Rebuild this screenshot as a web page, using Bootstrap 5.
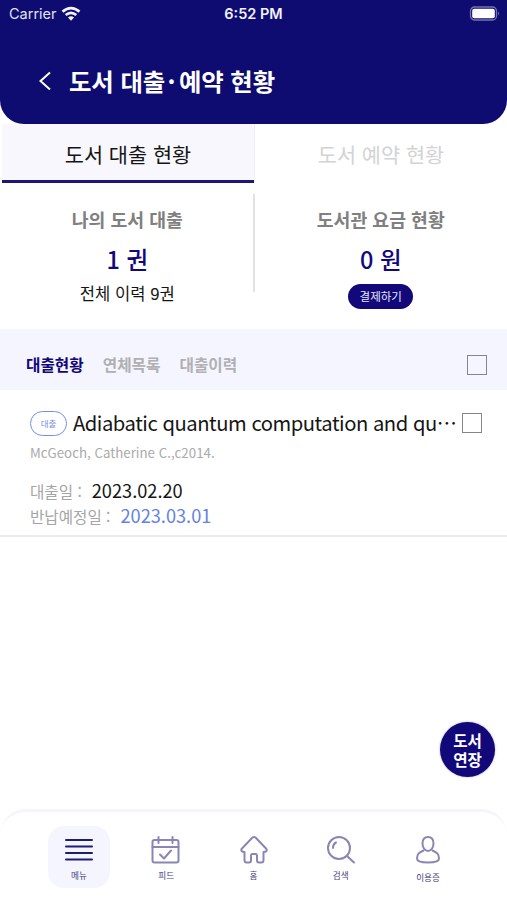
<!DOCTYPE html>
<html lang="ko">
<head>
<meta charset="utf-8">
<meta name="viewport" content="width=device-width, initial-scale=1">
<title>도서 대출·예약 현황</title>
<link href="https://cdn.jsdelivr.net/npm/bootstrap@5.3.0/dist/css/bootstrap.min.css" rel="stylesheet">
<style>
:root{--navy:#0e0c70;--pale:#f5f5ff}
body{font-family:"Noto Sans CJK KR",sans-serif;color:#151515;background:#fff;height:900px;overflow:hidden}
svg{display:block;flex:none}
.app-head{height:124px;background:var(--navy);border-radius:0 0 24px 24px}
.status{height:28px;font:15px/28px Inter,sans-serif;padding:0 7px 0 9px;color:#e2e2f5}
.status-side{width:90px}
.carrier{font-size:14.5px}
.clock{font-weight:600;font-size:14.5px;color:#f1f1fc;margin-right:2px}
.page-title{font-size:24.4px;line-height:36px;font-weight:700;margin:0 0 0 16px;letter-spacing:-.1px}
.page-title span{margin:0 3.5px 0 2.5px}
.title-row{padding:35px 0 0 38px}
.tabs-row{height:58px;font-size:20.8px;line-height:60px}
.tab-on{background:#f7f7fd;border-bottom:3px solid #1d1878;height:59px;margin-left:2px;width:252px}
.tab-off{color:#d3d3d3;border-left:1px solid #eef0f5}
.summary{height:147px;padding-top:12px}
.rule{width:2px;height:98px;background:#e2e2e4}
.sum-left{padding-left:2px}
.sum-name{font-size:18.3px;line-height:26px;font-weight:700;color:#808080;margin-top:12px}
.sum-value{font-size:23.5px;line-height:34px;font-weight:500;color:#12087d;margin-top:10px}
.sum-note{font-size:16.6px;line-height:24px;margin-top:5px}
.sum-note span{font-family:"Liberation Sans",sans-serif}
.pay{background:#12087a;color:#e8e8fb;font-size:11.5px;line-height:24px;width:65px;height:25px;margin-top:8px}
.filter{height:61px;background:var(--pale);font-size:15.7px;line-height:24px;padding:11px 20px 0 26px;color:#b0b0b3;font-weight:700}
.filter-gap{margin-left:19px}
.filter-on{color:#12087a}
.tick{width:20px;height:20px;border:1.5px solid #85858a;flex:none}
.loan{height:147px;border-bottom:2px solid #ececee;padding:18px 25px 0 30px}
.state{width:37px;height:25px;border:1.5px solid #7690e4;border-radius:13px;color:#7893e8;font-size:8.5px;line-height:22px;flex:none}
.book{font-size:20.2px;line-height:30px;margin-left:6px;width:389px;white-space:nowrap;letter-spacing:-.46px}
.author{font-size:13.3px;line-height:20px;color:#aaa;margin-top:5px}
.dates{font-size:15.6px;line-height:24.5px;color:#a5a5a5;padding-top:15px}
.dates div{height:24.5px}
.dates span{font-size:18.2px;color:#151515;margin-left:10px}
.dates .due{color:#6382e4}
.fab{position:absolute;left:440px;top:722px;width:55px;height:55px;background:#12087a;color:#fff;font-size:15.6px;line-height:19px;font-weight:700;box-shadow:0 0 2px #9c98c8}
.dock{height:91px;border-top:3px solid #f5f4fd;border-radius:26px 26px 0 0;padding:14px 48px 0}
.dock-item{width:62px;height:62px;color:#45417f;font-size:8.6px;line-height:12px;padding-top:9px}
.dock-item svg{fill:none;stroke:#8986b5;stroke-width:2;stroke-linecap:round;stroke-linejoin:round;margin:0 auto 4px}
.dock-item:last-child svg{margin-bottom:6px}
.dock-on{background:var(--pale);border-radius:16px}
.dock-on svg{stroke:#201b76}
</style>
<script src="https://cdn.jsdelivr.net/npm/bootstrap@5.3.0/dist/js/bootstrap.bundle.min.js"></script>
</head>
<body class="d-flex flex-column">
<header class="app-head text-white">
  <div class="status d-flex justify-content-between">
    <div class="status-side carrier d-flex align-items-center">Carrier
      <svg class="ms-1" width="20" height="16" viewBox="0 0 20 16" fill="none" stroke="#f4f4ff" stroke-width="2.7"><path d="M1.500 5.600Q10-1.500 18.500 5.600M4.700 9Q10 4.600 15.300 9"/><path d="M7 11.500q3-2.400 6 0l-3 3.200z" fill="#f4f4ff" stroke="none"/></svg>
    </div>
    <div class="clock">6:52 PM</div>
    <div class="status-side d-flex align-items-center justify-content-end">
      <svg width="31" height="16" viewBox="0 0 31 16"><rect x="1.500" y="1" width="26" height="13" rx="4" fill="none" stroke="#7774ad" stroke-width="1.3"/><rect x="3.200" y="2.800" width="22.600" height="9.400" rx="2" fill="#fff"/><path d="M29 5.500q2 2 0 4z" fill="#7774ad"/></svg>
    </div>
  </div>
  <div class="title-row d-flex align-items-center">
    <svg width="15" height="20" viewBox="-1 0 15 20" fill="none" stroke="#fff" stroke-width="2"><path d="M11 1.500 1.500 10l9.500 8.500"/></svg>
    <h1 class="page-title">도서 대출<span>·</span>예약 현황</h1>
  </div>
</header>
<nav class="tabs-row d-flex text-center">
  <div class="tab-on">도서 대출 현황</div>
  <div class="tab-off flex-fill">도서 예약 현황</div>
</nav>
<section class="summary d-flex text-center">
  <div class="sum-left flex-fill w-50">
    <div class="sum-name">나의 도서 대출</div>
    <div class="sum-value">1 권</div>
    <div class="sum-note">전체 이력 <span>9</span>권</div>
  </div>
  <div class="rule flex-shrink-0"></div>
  <div class="flex-fill w-50 d-flex flex-column align-items-center">
    <div class="sum-name">도서관 요금 현황</div>
    <div class="sum-value">0 원</div>
    <div class="pay rounded-pill">결제하기</div>
  </div>
</section>
<div class="filter d-flex align-items-center">
  <span class="filter-on">대출현황</span>
  <span class="filter-gap">연체목록</span>
  <span class="filter-gap">대출이력</span>
  <span class="tick ms-auto"></span>
</div>
<article class="loan">
  <div class="d-flex align-items-center">
    <span class="state text-center">대출</span>
    <span class="book">Adiabatic quantum computation and qu⋯</span>
    <span class="tick"></span>
  </div>
  <div class="author">McGeoch, Catherine C.,c2014.</div>
  <div class="dates">
    <div>대출일 :<span>2023.02.20</span></div>
    <div>반납예정일 :<span class="due">2023.03.01</span></div>
  </div>
</article>
<button class="fab btn rounded-circle border-0 p-0">도서<br>연장</button>
<nav class="dock d-flex justify-content-between mt-auto text-center">
  <div class="dock-item dock-on"><svg width="30" height="30" viewBox="0 0 30 30"><path d="M2 5h26M2 11.500h26M2 18h26M2 24.500h26"/></svg>메뉴</div>
  <div class="dock-item"><svg width="30" height="30" viewBox="0 0 30 30"><rect x="1.500" y="5" width="26" height="22.500" rx="2"/><path d="M1.500 12h26M7.500 2v6M21.500 2v6M9 19.500l4 4 7-8"/></svg>피드</div>
  <div class="dock-item"><svg width="30" height="30" viewBox="0 0 30 30"><path d="M13.500 2.500q1.500-1 3 0L27.500 14q1 3-3 3v8q0 2.500-2 2.500h-2.500q-2 0-2-2V21q0-2-1.500-2h-3q-1.500 0-1.500 2v4.500q0 2-2 2H7.500q-2 0-2-2.500V17q-4 0-3-3z"/></svg>홈</div>
  <div class="dock-item"><svg width="30" height="30" viewBox="0 0 30 30"><circle cx="13" cy="13" r="11"/><path d="M21 21l7 6.500M7 13q0-4 3-5.500"/></svg>검색</div>
  <div class="dock-item"><svg width="30" height="30" viewBox="0 0 30 30"><path d="M15 2c-4 0-5.500 3-5.500 6.500S11.500 16 15 16s5.500-4 5.500-7.500S19 2 15 2z"/><path d="M10.500 15.500C6 17.500 4 19 4 23.500q0 4 11 4t11-4c0-4.500-2-6-6.500-8"/></svg>이용증</div>
</nav>
</body>
</html>
